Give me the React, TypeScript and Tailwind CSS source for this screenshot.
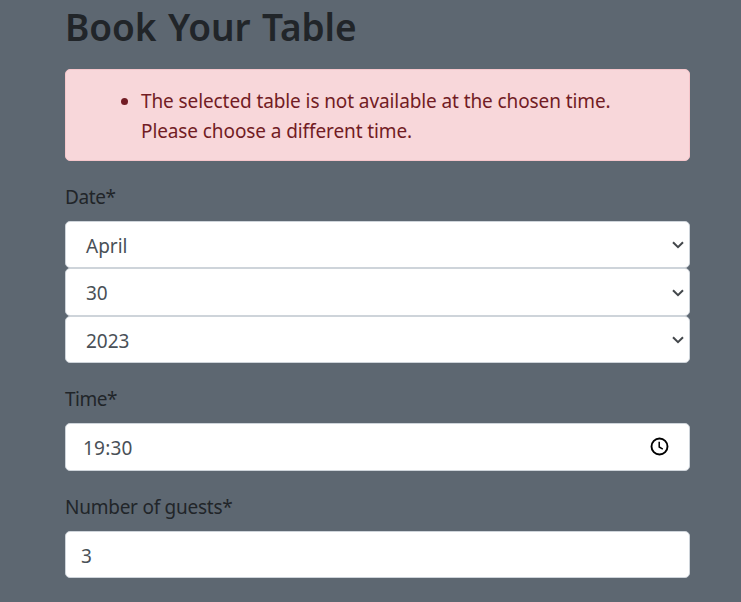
import React from "react";

function Chevron() {
  return (
    <svg width="12" height="8" viewBox="0 0 12 8" fill="none" stroke="#43474b" strokeWidth="2">
      <path d="M1 1.2 L6 6.2 L11 1.2" />
    </svg>
  );
}

function Select({ value, className }: { value: string; className: string }) {
  return (
    <div className={`flex items-center justify-between rounded-[5px] border border-[#ced4da] bg-white pl-5 pr-[5px] text-[#495057] ${className}`}>
      <span>{value}</span>
      <Chevron />
    </div>
  );
}

export default function App() {
  return (
    <main className="h-[602px] w-[741px] overflow-hidden bg-[#5d6771] pl-[65px] pr-[51px] font-['Noto_Sans',sans-serif] text-[19px] leading-[30px] text-[#212529]">
      <h1 className="h-[69px] whitespace-nowrap pt-[4px] text-[37px] font-semibold leading-[46px] tracking-[-0.1px] [word-spacing:2px]">Book Your Table</h1>
      <div className="h-[92px] rounded-[5px] border border-[#f5c6cb] bg-[#f8d7da] pl-[75px] pt-[16px] tracking-[-0.1px] text-[#721c24]">
        <ul className="list-disc">
          <li>
            <span className="block whitespace-nowrap">The selected table is not available at the chosen time.</span>
            <span className="block whitespace-nowrap">Please choose a different time.</span>
          </li>
        </ul>
      </div>
      <div className="h-[60px] pt-[21px] tracking-[-0.4px]">Date*</div>
      <Select value="April" className="h-[47px] [&>span]:pt-[3px]" />
      <Select value="30" className="h-[48px] [&>span]:pt-px [&>svg]:mt-px" />
      <Select value="2023" className="h-[47px] [&>span]:pt-[3px]" />
      <div className="h-[60px] pt-[21px] tracking-[-0.5px]">Time*</div>
      <div className="flex h-[48px] items-center justify-between rounded-[5px] border border-[#ced4da] bg-white pl-[17px] pr-5 text-[#495057]">
        <span className="pt-px tracking-[0.2px]">19:30</span>
        <svg className="-mt-px" width="19" height="19" viewBox="0 0 19 19" fill="none" stroke="#000" strokeWidth="1.9">
          <circle cx="9.5" cy="9.5" r="8" />
          <path d="M9.2 4.7V10L12.8 12.2" strokeWidth="1.5" />
        </svg>
      </div>
      <div className="h-[60px] pt-[21px] tracking-[-0.25px]">Number of guests*</div>
      <div className="flex h-[47px] items-center rounded-[5px] border border-[#ced4da] bg-white pl-[15px] pt-[3px] text-[#495057]">3</div>
    </main>
  );
}
